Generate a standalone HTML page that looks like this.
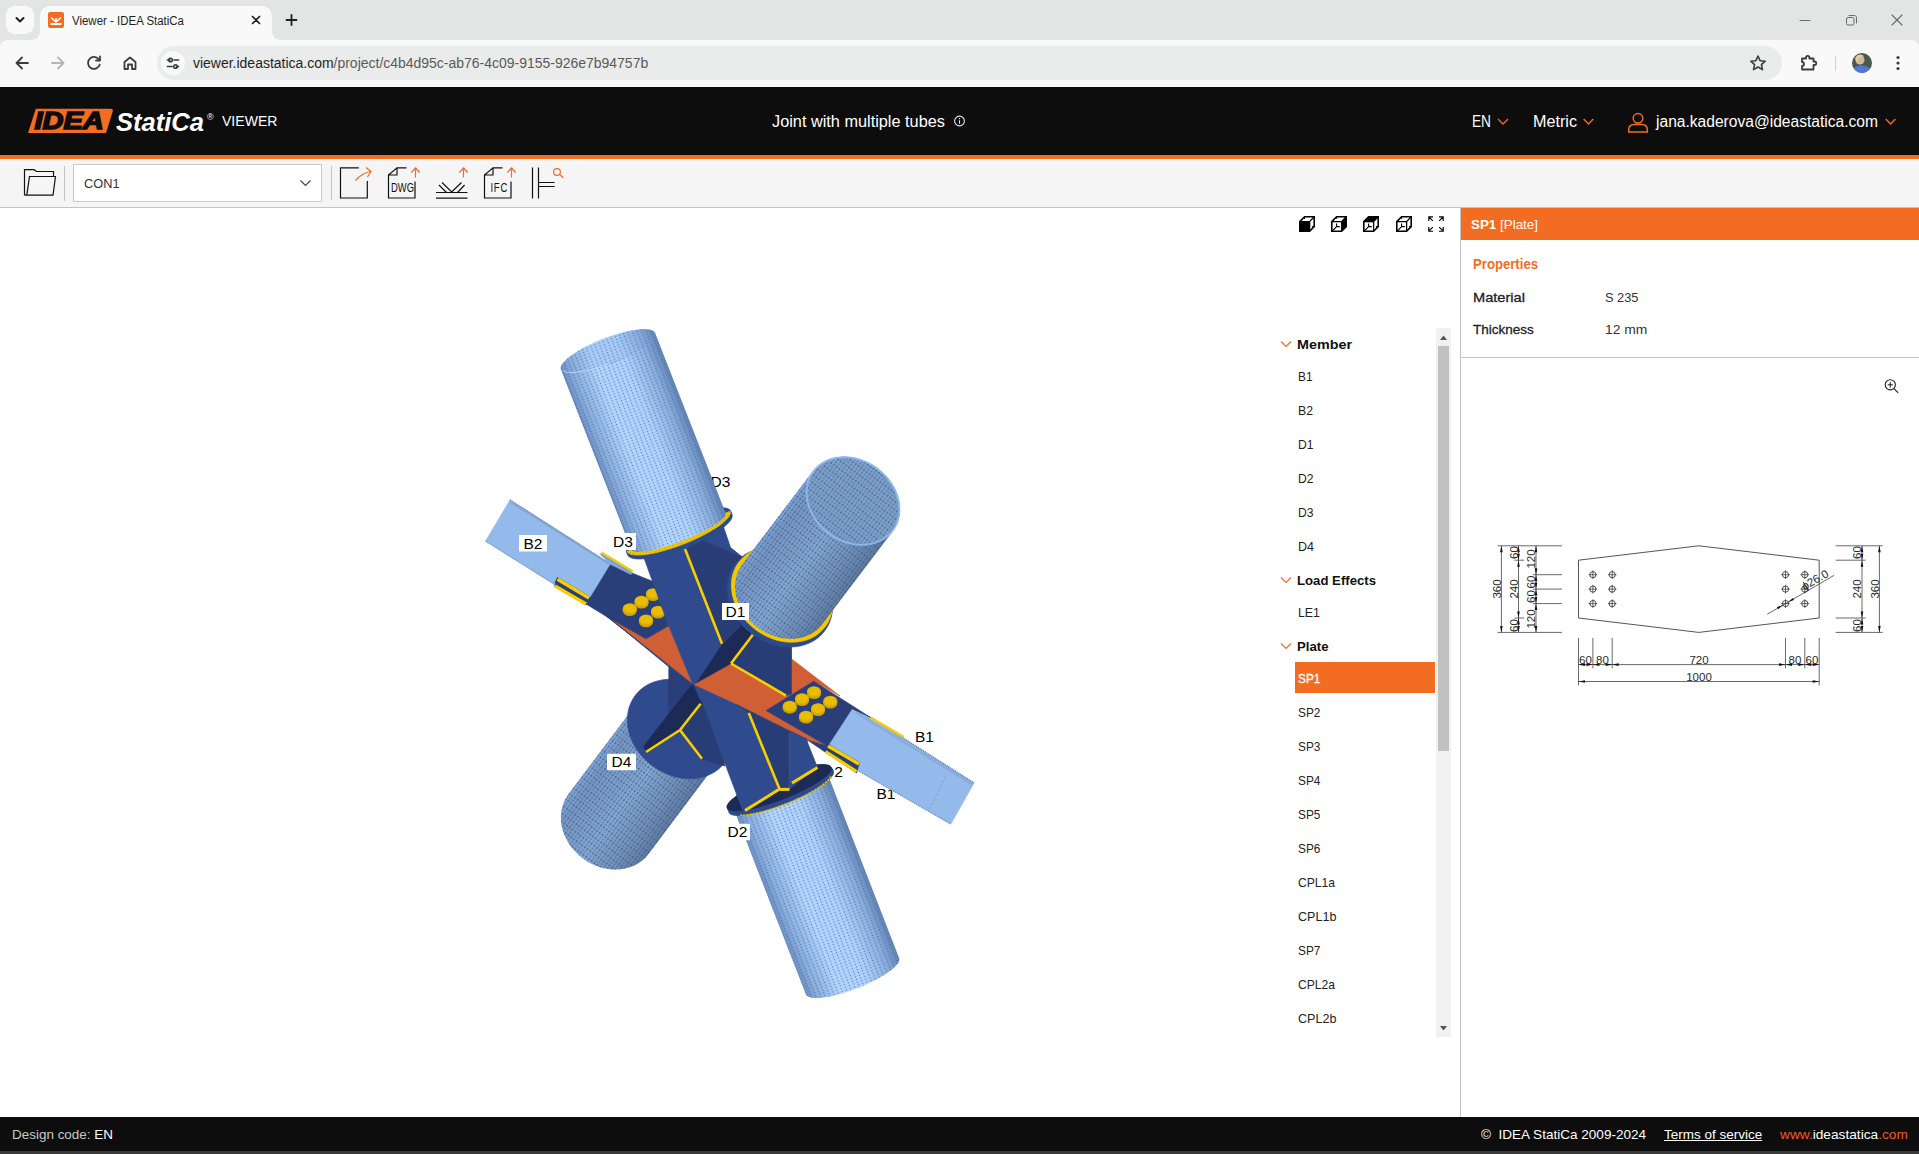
<!DOCTYPE html>
<html lang="en">
<head>
<meta charset="utf-8">
<title>Viewer - IDEA StatiCa</title>
<style>
*{box-sizing:border-box;margin:0;padding:0}
html,body{width:1919px;height:1154px;overflow:hidden;background:#fff}
body{position:relative;font-family:"Liberation Sans",sans-serif;color:#1f1f1f;font-size:14px}
.abs{position:absolute}
.t{position:absolute;white-space:nowrap;line-height:1}
svg{position:absolute;overflow:visible}
/* browser chrome */
#tabstrip{left:0;top:0;width:1919px;height:40px;background:#e3e5e4}
#navbar{left:0;top:40px;width:1919px;height:47px;background:#f9f9f9}
#tabsearch{left:6px;top:6px;width:28px;height:28px;border-radius:9px;background:#f9f9f9}
#tab{left:40px;top:6px;width:232px;height:34px;background:#f9f9f9;border-radius:10px 10px 0 0}
#omni{left:157px;top:46px;width:1625px;height:34px;border-radius:17px;background:#eaeceb}
#omnichip{left:161px;top:51px;width:24px;height:24px;border-radius:12px;background:#f9f9f9}
/* app */
#hdr{left:0;top:87px;width:1919px;height:68px;background:#0d0d0d}
#hdrline{left:0;top:155px;width:1919px;height:4px;background:#f26c22}
#tbar{left:0;top:159px;width:1919px;height:49px;background:#f5f5f5;border-bottom:1px solid #c4c4c4}
#sel{left:73px;top:164px;width:249px;height:38px;background:#fff;border:1px solid #c9c9c9}
#footer{left:0;top:1117px;width:1919px;height:34px;background:#0d0d0d}
#footer2{left:0;top:1151px;width:1919px;height:3px;background:#3a3a3a}
#rpanel{left:1460px;top:208px;width:459px;height:909px;background:#fff;border-left:1px solid #c4c4c4}
#rhead{left:1461px;top:208px;width:458px;height:32px;background:#f26c22}
#rsep{left:1461px;top:357px;width:458px;height:1px;background:#c4c4c4}
#sbtrack{left:1436px;top:328px;width:15px;height:709px;background:#f1f1f1}
#sbthumb{left:1438px;top:346px;width:11px;height:405px;background:#c1c1c1}
#selrow{left:1295px;top:662px;width:140px;height:31px;background:#f26c22}
.tree{font-size:13.5px;color:#222}
.treeh{font-size:13.5px;font-weight:bold;color:#111}
.w{color:#fff}
</style>
</head>
<body>
<!-- ===== browser chrome ===== -->
<div class="abs" id="tabstrip"></div>
<div class="abs" id="navbar"></div>
<div class="abs" id="tabsearch"></div>
<div class="abs" id="tab"></div>
<div class="abs" id="omni"></div>
<div class="abs" id="omnichip"></div>
<!--CHROME-ICONS-START-->
<svg id="chromeicons" style="left:0;top:0" width="1919" height="87" viewBox="0 0 1919 87" fill="none" stroke-linecap="round" stroke-linejoin="round">
<!-- tab curves -->
<path d="M30 40 Q40 40 40 30 L40 40Z M282 40 Q272 40 272 30 L272 40Z" fill="#f9f9f9" stroke="none"/>
<path d="M0 48 Q0 40 8 40 L0 40Z M1919 48 Q1919 40 1911 40 L1919 40Z" fill="#e3e5e4" stroke="none"/>
<!-- tab search chevron -->
<path d="M16.5 18 L20 21.5 L23.5 18" stroke="#1f1f1f" stroke-width="2"/>
<!-- favicon -->
<rect x="48" y="12" width="16" height="16" rx="2" fill="#f26c22" stroke="none"/>
<path d="M51.5 18 L56 22 L60.500 18 M56 22 L56 18.500" stroke="#fff" stroke-width="1.600"/>
<path d="M50.500 24 H61.500" stroke="#fff" stroke-width="2" stroke-linecap="butt"/>
<!-- tab close -->
<path d="M252.500 16.500 L259.500 23.500 M259.500 16.500 L252.500 23.500" stroke="#1f1f1f" stroke-width="1.700"/>
<!-- plus -->
<path d="M286.500 20 H296.500 M291.500 15 V25" stroke="#1f1f1f" stroke-width="1.800"/>
<!-- window controls -->
<path d="M1800 20.500 H1810" stroke="#6b6b6b" stroke-width="1"/>
<rect x="1846.500" y="17.500" width="7.500" height="7.500" rx="1.500" stroke="#6b6b6b" stroke-width="1"/>
<path d="M1849 15.500 H1854.500 Q1856.500 15.500 1856.500 17.500 V23" stroke="#6b6b6b" stroke-width="1"/>
<path d="M1892 15 L1902 25 M1902 15 L1892 25" stroke="#6b6b6b" stroke-width="1.100"/>
<!-- back -->
<path d="M28 63 H16.500 M22 57.500 L16.500 63 L22 68.500" stroke="#3c3c3c" stroke-width="1.800"/>
<!-- forward -->
<path d="M52 63 H63.500 M58 57.500 L63.500 63 L58 68.500" stroke="#b4b6b5" stroke-width="1.800"/>
<!-- reload -->
<path d="M99 59.500 A6 6 0 1 0 99.800 64.500" stroke="#3c3c3c" stroke-width="1.800"/>
<path d="M100 56.500 V60.500 H96" stroke="#3c3c3c" stroke-width="1.800"/>
<!-- home -->
<path d="M124.500 62 L130 57.500 L135.500 62 V69 H132 V64.500 H128 V69 H124.500Z" stroke="#3c3c3c" stroke-width="1.800"/>
<!-- tune -->
<path d="M167.500 60 H170 M174 60 H178.500 M167.500 66.500 H172 M176.500 66.500 H178.500" stroke="#3c3c3c" stroke-width="1.700"/>
<circle cx="170.500" cy="60" r="1.800" stroke="#3c3c3c" stroke-width="1.500"/>
<circle cx="175.500" cy="66.500" r="1.800" stroke="#3c3c3c" stroke-width="1.500"/>
<!-- star -->
<path d="M1758 56 L1760.100 60.700 L1765.200 61.200 L1761.400 64.600 L1762.500 69.600 L1758 67 L1753.500 69.600 L1754.600 64.600 L1750.800 61.200 L1755.900 60.700Z" stroke="#3c3c3c" stroke-width="1.600"/>
<!-- extension -->
<path d="M1802 58.500 H1806 V57.500 A1.700 1.700 0 0 1 1809.400 57.500 V58.500 H1813.500 V61.500 H1814.500 A1.700 1.700 0 0 1 1814.500 65 H1813.500 V69.500 H1802 V66 A2 2 0 0 0 1802 62Z" stroke="#3c3c3c" stroke-width="1.800"/>
<!-- sep -->
<path d="M1835.500 56 V70" stroke="#c3dfe6" stroke-width="1.300"/>
<!-- avatar -->
<circle cx="1862" cy="63" r="10" fill="#4a5a4a" stroke="none"/>
<circle cx="1860" cy="60" r="4.500" fill="#d9b79a" stroke="none"/>
<path d="M1853.500 68 Q1861 62.500 1870 68.500 Q1866 73 1862 73 Q1857 73 1853.500 68Z" fill="#4f78d6" stroke="none"/>
<path d="M1855 58 Q1859 52 1864.500 56.500 Q1860 56 1856.500 62Z" fill="#e5cf9c" stroke="none"/>
<!-- dots -->
<circle cx="1898" cy="57.500" r="1.600" fill="#3c3c3c" stroke="none"/>
<circle cx="1898" cy="63" r="1.600" fill="#3c3c3c" stroke="none"/>
<circle cx="1898" cy="68.500" r="1.600" fill="#3c3c3c" stroke="none"/>
</svg>
<!--CHROME-ICONS-END-->
<div class="t" id="tabtitle" style="left:72.0px;top:14.5px;font-size:12px;color:#1f1f1f;transform:scaleX(0.956);transform-origin:0 50%">Viewer - IDEA StatiCa</div>
<div class="t" id="url" style="left:193.0px;top:56px;font-size:14px;color:#1f1f1f;transform:scaleX(0.998);transform-origin:0 50%">viewer.ideastatica.com<span style="color:#5a5a5a">/project/c4b4d95c-ab76-4c09-9155-926e7b94757b</span></div>

<!-- ===== app header ===== -->
<div class="abs" id="hdr"></div>
<div class="abs" id="hdrline"></div>
<div class="t w" id="viewer" style="left:222.0px;top:114px;font-size:14px;transform:scaleX(1.003);transform-origin:0 50%">VIEWER</div>
<div class="t w" id="ptitle" style="left:772.0px;top:114px;font-size:16px;transform:scaleX(1.018);transform-origin:0 50%">Joint with multiple tubes</div>
<div class="t w" id="lang" style="left:1471.7px;top:114px;font-size:16px;transform:scaleX(0.855);transform-origin:0 50%">EN</div>
<div class="t w" id="metric" style="left:1532.5px;top:114px;font-size:16px;transform:scaleX(1.010);transform-origin:0 50%">Metric</div>
<div class="t w" id="email" style="left:1656.0px;top:114px;font-size:16px;transform:scaleX(0.974);transform-origin:0 50%">jana.kaderova@ideastatica.com</div>
<!--HDR-ICONS-START-->
<svg id="hdricons" style="left:0;top:87px" width="1919" height="68" viewBox="0 87 1919 68" fill="none" stroke="#f26c22" stroke-width="1.300">
<!-- logo -->
<path d="M28 133 L35.800 108.700 H110.500 Q113.600 108.700 112.700 111.500 L106 133Z" fill="#f26c22" stroke="none"/>
<text x="34.500" y="129.300" font-family="Liberation Sans, sans-serif" font-weight="bold" font-style="italic" font-size="23" fill="#0d0d0d" stroke="#0d0d0d" stroke-width="1.500" textLength="69" lengthAdjust="spacingAndGlyphs">IDEA</text>
<text x="116" y="130.500" font-family="Liberation Sans, sans-serif" font-weight="bold" font-style="italic" font-size="26.500" fill="#fff" stroke="none" textLength="88" lengthAdjust="spacingAndGlyphs">StatiCa</text>
<text x="207" y="119.500" font-family="Liberation Sans, sans-serif" font-size="9" fill="#fff" stroke="none">®</text>
<!-- info -->
<circle cx="959.500" cy="121" r="4.900" stroke="#e8e8e8" stroke-width="1.100"/>
<path d="M959.500 120.300 V123.700 M959.500 118 V119.200" stroke="#e8e8e8" stroke-width="1.100"/>
<!-- chevrons -->
<path d="M1498 119 L1503 124 L1508 119 M1583.700 119 L1588.500 124 L1593.300 119 M1885.800 119 L1890.600 124 L1895.400 119"/>
<!-- user -->
<circle cx="1638" cy="118.300" r="4.800" stroke-width="1.500"/>
<path d="M1628.700 132 V130 Q1628.700 124.500 1634 124.500 H1642 Q1647.300 124.500 1647.300 130 V132Z" stroke-width="1.500"/>
</svg>
<!--HDR-ICONS-END-->

<!-- ===== toolbar ===== -->
<div class="abs" id="tbar"></div>
<div class="abs" id="sel"></div>
<div class="t" id="con1" style="left:84.2px;top:177px;font-size:13.5px;color:#333;transform:scaleX(0.946);transform-origin:0 50%">CON1</div>
<!--TB-ICONS-START-->
<svg id="tbicons" style="left:0;top:159px" width="600" height="49" viewBox="0 159 600 49" fill="none" stroke="#111" stroke-width="1.200">
<!-- folder -->
<path d="M24.500 195.200 V169.700 H34 L36.500 171.500 H53.500 V176.500 M24.500 195.200 H53 L55.500 176.500 H29.500 L26.800 195.200"/>
<path d="M64.500 166 V201 M331.500 166 V200" stroke="#c4c4c4" stroke-width="1"/>
<!-- select chevron -->
<path d="M300.500 180.500 L305.500 185.500 L310.500 180.500" stroke="#444" stroke-width="1.200"/>
<!-- export -->
<path d="M358.800 167.800 H340.500 V198 H367.300 V181"/>
<path d="M355.500 180.500 Q362 173 370.500 171.500 M366 167.500 L371 171.500 L367.500 177" stroke="#f26c22"/>
<!-- dwg -->
<path d="M406.500 167.800 H397 L388.500 175 V198 H415 V181.500 M388.500 175 H397 V167.800"/>
<path d="M415.500 177.500 V168 M411.300 172.500 L415.500 168 L419.700 172.500" stroke="#f26c22"/>
<!-- weld -->
<path d="M436 192.500 H467.500 M436 198.200 H467.500 M439 185 L446.500 192.500 M442 182.500 L451.700 192 L461.500 182.500 M464.600 185 L457.500 192.500"/>
<path d="M463.500 177.500 V168 M459.300 172.500 L463.500 168 L467.700 172.500" stroke="#f26c22"/>
<!-- ifc -->
<path d="M502.500 167.800 H493 L484.500 175 V198 H511 V181.500 M484.500 175 H493 V167.800"/>
<path d="M511.500 177.500 V168 M507.300 172.500 L511.500 168 L515.700 172.500" stroke="#f26c22"/>
<!-- section -->
<path d="M532.500 167.500 V198.500 M538.500 167.500 V198.500 M538.500 182.500 H554.600 M538.500 186.500 H554.600"/>
<circle cx="557" cy="172" r="3.400" stroke="#f26c22"/>
<path d="M559.500 174.500 L563.500 177.800" stroke="#f26c22"/>
<text x="391" y="191.500" font-family="Liberation Sans, sans-serif" font-size="13" fill="#111" stroke="none" textLength="23" lengthAdjust="spacingAndGlyphs">DWG</text>
<text x="490.500" y="191.500" font-family="Liberation Sans, sans-serif" font-size="13" fill="#111" stroke="none" textLength="17.500" lengthAdjust="spacingAndGlyphs" letter-spacing="1">IFC</text>
</svg>
<!--TB-ICONS-END-->

<!-- ===== 3D view ===== -->
<!--VIEWICONS-START-->
<svg id="viewicons" style="left:0;top:208px" width="1460" height="40" viewBox="0 208 1460 40" fill="none" stroke="#000"><g transform="translate(1299,216)"><path d="M0.8 5.6 L5.6 0.8 H15.2 V10.6 L10.6 15.2 H0.8Z" stroke-width="1.600" stroke-linejoin="miter"/><path d="M0.8 5.6 H10.6 V15.2 M10.600 5.600 L15.200 0.800" stroke-width="1.300"/><path d="M0.8 5.6 H10.6 V15.2 H0.8Z" fill="#000"/><path d="M5.6 1 V3 M15 10.600 H13 " stroke-width="1"/></g><g transform="translate(1331,216)"><path d="M0.8 5.6 L5.6 0.8 H15.2 V10.6 L10.6 15.2 H0.8Z" stroke-width="1.600" stroke-linejoin="miter"/><path d="M0.8 5.6 H10.6 V15.2 M10.600 5.600 L15.200 0.800" stroke-width="1.300"/><path d="M5.600 1 V2.800 M5.600 7.400 V10.600 H8.800 M13 10.600 H15 M5.600 10.600 L1.400 14.800" stroke-width="1.100"/><path d="M10.6 5.6 L15.2 0.8 V10.6 L10.6 15.2Z" fill="#000"/></g><g transform="translate(1363,216)"><path d="M0.8 5.6 L5.6 0.8 H15.2 V10.6 L10.6 15.2 H0.8Z" stroke-width="1.600" stroke-linejoin="miter"/><path d="M0.8 5.6 H10.6 V15.2 M10.600 5.600 L15.200 0.800" stroke-width="1.300"/><path d="M5.600 1 V2.800 M5.600 7.400 V10.600 H8.800 M13 10.600 H15 M5.600 10.600 L1.400 14.800" stroke-width="1.100"/><path d="M0.8 5.6 L5.6 0.8 H15.2 L10.6 5.6Z" fill="#000"/></g><g transform="translate(1396,216)"><path d="M0.8 5.6 L5.6 0.8 H15.2 V10.6 L10.6 15.2 H0.8Z" stroke-width="1.600" stroke-linejoin="miter"/><path d="M0.8 5.6 H10.6 V15.2 M10.600 5.600 L15.200 0.800" stroke-width="1.300"/><path d="M5.600 1 V2.800 M5.600 7.400 V10.600 H8.800 M13 10.600 H15 M5.600 10.600 L1.400 14.800" stroke-width="1.100"/></g><g transform="translate(1428,216)" stroke-width="1.150"><path d="M0.8 5 V0.8 H5 M0.800 0.800 L4.800 4.800 M11 0.800 H15.200 V5 M15.200 0.800 L11.200 4.800 M0.800 11 V15.200 H5 M0.800 15.200 L4.800 11.200 M11 15.200 H15.200 V11 M15.200 15.200 L11.200 11.200"/></g></svg>
<!--VIEWICONS-END-->
<!--MODEL-START-->
<svg id="model" style="left:440px;top:300px" width="580" height="720" viewBox="440 300 580 720">
<defs><pattern id="hA" patternUnits="userSpaceOnUse" width="4.4" height="8.8" patternTransform="rotate(-21.3)"><path d="M2.2 0 V8.8" stroke="#4f6689" stroke-width="1.25" stroke-dasharray="1.3 1.6"/></pattern><pattern id="hB" patternUnits="userSpaceOnUse" width="3.4" height="6.8" patternTransform="rotate(36.5)"><path d="M1.7 0 V6.8" stroke="#3d506f" stroke-width="1.15" stroke-dasharray="1.2 1.6"/></pattern><linearGradient id="g1" gradientUnits="userSpaceOnUse" x1="639.8" y1="699.3" x2="720.2" y2="758.7"><stop offset="0" stop-color="#7ca3d6"/><stop offset="0.12" stop-color="#7596c4"/><stop offset="0.5" stop-color="#81a7d4"/><stop offset="0.8" stop-color="#6f8fba"/><stop offset="1" stop-color="#5c79a2"/></linearGradient><linearGradient id="g2" gradientUnits="userSpaceOnUse" x1="733.6" y1="808.5" x2="826.9" y2="772.3"><stop offset="0" stop-color="#6a8ec2"/><stop offset="0.1" stop-color="#88addf"/><stop offset="0.33" stop-color="#b0d5ff"/><stop offset="0.62" stop-color="#aed2ff"/><stop offset="0.86" stop-color="#88acde"/><stop offset="1" stop-color="#5f82b5"/></linearGradient><linearGradient id="g3" gradientUnits="userSpaceOnUse" x1="560.9" y1="369.6" x2="655.1" y2="333.0"><stop offset="0" stop-color="#6a8ec2"/><stop offset="0.1" stop-color="#88addf"/><stop offset="0.33" stop-color="#b0d5ff"/><stop offset="0.62" stop-color="#aed2ff"/><stop offset="0.86" stop-color="#88acde"/><stop offset="1" stop-color="#5f82b5"/></linearGradient><linearGradient id="g4" gradientUnits="userSpaceOnUse" x1="741.8" y1="564.8" x2="822.2" y2="624.2"><stop offset="0" stop-color="#7ca3d6"/><stop offset="0.12" stop-color="#7596c4"/><stop offset="0.5" stop-color="#81a7d4"/><stop offset="0.8" stop-color="#6f8fba"/><stop offset="1" stop-color="#5c79a2"/></linearGradient></defs>
<g id="lblback" font-family="Liberation Sans, sans-serif" font-size="15.5" fill="#000"><text x="710.500" y="486.500">D3</text><text x="823" y="776.500">D2</text><text x="876.500" y="798.500">B1</text></g>
<path d="M648.7 853.7 L645.8 857.2 L642.5 860.2 L638.8 862.9 L634.8 865.2 L630.5 867.0 L626.0 868.3 L621.3 869.2 L616.4 869.6 L611.5 869.4 L606.5 868.8 L601.5 867.7 L596.6 866.1 L591.9 864.0 L587.3 861.5 L583.0 858.6 L578.9 855.3 L575.2 851.6 L571.8 847.7 L568.8 843.5 L566.3 839.1 L564.2 834.5 L562.6 829.8 L561.5 825.1 L561.0 820.3 L560.9 815.6 L561.4 810.9 L562.4 806.4 L563.9 802.1 L565.9 798.1 L568.3 794.3 L639.8 699.3 L642.7 695.8 L646.0 692.8 L649.7 690.1 L653.7 687.8 L658.0 686.0 L662.5 684.7 L667.2 683.8 L672.1 683.4 L677.0 683.6 L682.0 684.2 L687.0 685.3 L691.9 686.9 L696.6 689.0 L701.2 691.5 L705.5 694.4 L709.6 697.7 L713.3 701.4 L716.7 705.3 L719.7 709.5 L722.2 713.9 L724.3 718.5 L725.9 723.2 L727.0 727.9 L727.5 732.7 L727.6 737.4 L727.1 742.1 L726.1 746.6 L724.6 750.9 L722.6 754.9 L720.2 758.7Z" fill="url(#g1)" />
<path d="M648.7 853.7 L645.8 857.2 L642.5 860.2 L638.8 862.9 L634.8 865.2 L630.5 867.0 L626.0 868.3 L621.3 869.2 L616.4 869.6 L611.5 869.4 L606.5 868.8 L601.5 867.7 L596.6 866.1 L591.9 864.0 L587.3 861.5 L583.0 858.6 L578.9 855.3 L575.2 851.6 L571.8 847.7 L568.8 843.5 L566.3 839.1 L564.2 834.5 L562.6 829.8 L561.5 825.1 L561.0 820.3 L560.9 815.6 L561.4 810.9 L562.4 806.4 L563.9 802.1 L565.9 798.1 L568.3 794.3 L639.8 699.3 L642.7 695.8 L646.0 692.8 L649.7 690.1 L653.7 687.8 L658.0 686.0 L662.5 684.7 L667.2 683.8 L672.1 683.4 L677.0 683.6 L682.0 684.2 L687.0 685.3 L691.9 686.9 L696.6 689.0 L701.2 691.5 L705.5 694.4 L709.6 697.7 L713.3 701.4 L716.7 705.3 L719.7 709.5 L722.2 713.9 L724.3 718.5 L725.9 723.2 L727.0 727.9 L727.5 732.7 L727.6 737.4 L727.1 742.1 L726.1 746.6 L724.6 750.9 L722.6 754.9 L720.2 758.7Z" fill="url(#hB)" opacity="0.85"/>
<path d="M725.0 762.3 L721.9 765.9 L718.4 769.2 L714.4 772.1 L710.0 774.4 L705.3 776.3 L700.4 777.6 L695.2 778.5 L689.8 778.7 L684.4 778.5 L678.8 777.7 L673.4 776.3 L667.9 774.5 L662.6 772.1 L657.5 769.3 L652.7 766.0 L648.1 762.3 L643.9 758.3 L640.1 753.9 L636.7 749.3 L633.8 744.4 L631.4 739.4 L629.6 734.2 L628.3 729.0 L627.5 723.8 L627.3 718.7 L627.8 713.7 L628.7 708.8 L630.3 704.2 L632.4 699.8 L635.0 695.7 L638.1 692.1 L641.6 688.8 L645.6 685.9 L650.0 683.6 L654.7 681.7 L659.6 680.4 L664.8 679.5 L670.2 679.3 L675.6 679.5 L681.2 680.3 L686.6 681.7 L692.1 683.5 L697.4 685.9 L702.5 688.7 L707.3 692.0 L711.9 695.7 L716.1 699.7 L719.9 704.1 L723.3 708.7 L726.2 713.6 L728.6 718.6 L730.4 723.8 L731.7 729.0 L732.5 734.2 L732.7 739.3 L732.2 744.3 L731.3 749.2 L729.7 753.8 L727.6 758.2 L725.0 762.3Z" fill="#2f4a8d" stroke="#2f4a8d" stroke-width="0.7" stroke-linejoin="round" />
<path d="M899.1 958.1 L899.3 959.4 L899.1 961.0 L898.3 962.7 L897.0 964.6 L895.2 966.6 L893.0 968.7 L890.3 970.8 L887.2 973.1 L883.7 975.3 L879.9 977.6 L875.8 979.9 L871.4 982.1 L866.8 984.3 L862.1 986.4 L857.2 988.3 L852.3 990.1 L847.4 991.8 L842.6 993.3 L837.9 994.6 L833.3 995.8 L828.9 996.7 L824.8 997.3 L821.0 997.8 L817.6 998.0 L814.5 998.0 L811.8 997.7 L809.6 997.2 L807.9 996.4 L806.6 995.5 L805.9 994.3 L733.6 808.5 L733.4 807.2 L733.7 805.6 L734.5 803.9 L735.8 802.0 L737.5 800.0 L739.8 797.9 L742.5 795.8 L745.6 793.5 L749.0 791.3 L752.9 789.0 L757.0 786.7 L761.4 784.5 L766.0 782.3 L770.7 780.2 L775.5 778.3 L780.4 776.5 L785.3 774.8 L790.2 773.3 L794.9 772.0 L799.5 770.8 L803.8 769.9 L807.9 769.3 L811.7 768.8 L815.2 768.6 L818.3 768.6 L820.9 768.9 L823.1 769.4 L824.9 770.2 L826.1 771.1 L826.9 772.3Z" fill="url(#g2)" />
<path d="M899.1 958.1 L899.3 959.4 L899.1 961.0 L898.3 962.7 L897.0 964.6 L895.2 966.6 L893.0 968.7 L890.3 970.8 L887.2 973.1 L883.7 975.3 L879.9 977.6 L875.8 979.9 L871.4 982.1 L866.8 984.3 L862.1 986.4 L857.2 988.3 L852.3 990.1 L847.4 991.8 L842.6 993.3 L837.9 994.6 L833.3 995.8 L828.9 996.7 L824.8 997.3 L821.0 997.8 L817.6 998.0 L814.5 998.0 L811.8 997.7 L809.6 997.2 L807.9 996.4 L806.6 995.5 L805.9 994.3 L733.6 808.5 L733.4 807.2 L733.7 805.6 L734.5 803.9 L735.8 802.0 L737.5 800.0 L739.8 797.9 L742.5 795.8 L745.6 793.5 L749.0 791.3 L752.9 789.0 L757.0 786.7 L761.4 784.5 L766.0 782.3 L770.7 780.2 L775.5 778.3 L780.4 776.5 L785.3 774.8 L790.2 773.3 L794.9 772.0 L799.5 770.8 L803.8 769.9 L807.9 769.3 L811.7 768.8 L815.2 768.6 L818.3 768.6 L820.9 768.9 L823.1 769.4 L824.9 770.2 L826.1 771.1 L826.9 772.3Z" fill="url(#hA)" opacity="0.78"/>
<path d="M833.0 772.1 L833.2 773.4 L832.8 774.9 L831.8 776.6 L830.3 778.4 L828.2 780.4 L825.6 782.6 L822.6 784.8 L819.0 787.1 L815.1 789.5 L810.8 791.9 L806.1 794.3 L801.2 796.7 L796.1 799.1 L790.8 801.4 L785.4 803.5 L779.9 805.6 L774.5 807.5 L769.1 809.2 L763.8 810.8 L758.8 812.2 L754.0 813.3 L749.4 814.2 L745.3 814.9 L741.5 815.3 L738.1 815.5 L735.3 815.4 L732.9 815.1 L731.0 814.5 L729.7 813.6 L729.0 812.6 L727.2 807.9 L727.0 806.6 L727.4 805.2 L728.4 803.5 L729.9 801.6 L732.0 799.6 L734.6 797.5 L737.6 795.2 L741.2 792.9 L745.1 790.5 L749.4 788.1 L754.1 785.7 L759.0 783.3 L764.1 781.0 L769.4 778.7 L774.9 776.5 L780.3 774.5 L785.8 772.6 L791.1 770.8 L796.4 769.3 L801.4 767.9 L806.2 766.8 L810.8 765.9 L814.9 765.2 L818.7 764.8 L822.1 764.6 L824.9 764.7 L827.3 765.0 L829.2 765.6 L830.5 766.4 L831.2 767.5Z" fill="#2d4a8c" stroke="#2d4a8c" stroke-width="0.7" stroke-linejoin="round" />
<path d="M830.9 776.3 L830.0 777.9 L828.7 779.6 L826.9 781.5 L824.6 783.4 L821.8 785.5 L818.7 787.7 L815.2 789.9 L811.3 792.1 L807.2 794.4 L802.8 796.6 L798.1 798.8 L793.3 800.9 L788.4 803.0 L783.4 804.9 L778.4 806.8 L773.4 808.5 L768.5 810.0 L763.7 811.4 L759.1 812.5 L754.7 813.5 L750.6 814.3 L746.8 814.9 L743.3 815.2 L740.2 815.3" stroke="#e7bd00" stroke-width="1.5" fill="none" stroke-dasharray="2.5 0.8"/>
<path d="M831.2 767.5 L831.4 768.8 L831.0 770.2 L830.0 771.9 L828.5 773.8 L826.4 775.8 L823.8 777.9 L820.8 780.2 L817.2 782.5 L813.3 784.9 L809.0 787.3 L804.3 789.7 L799.4 792.1 L794.3 794.4 L789.0 796.7 L783.6 798.9 L778.1 800.9 L772.6 802.8 L767.3 804.6 L762.0 806.1 L757.0 807.5 L752.2 808.6 L747.6 809.5 L743.5 810.2 L739.7 810.6 L736.3 810.8 L733.5 810.7 L731.1 810.4 L729.2 809.8 L727.9 809.0 L727.2 807.9 L727.0 806.6 L727.4 805.2 L728.4 803.5 L729.9 801.6 L732.0 799.6 L734.6 797.5 L737.6 795.2 L741.2 792.9 L745.1 790.5 L749.4 788.1 L754.1 785.7 L759.0 783.3 L764.1 781.0 L769.4 778.7 L774.9 776.5 L780.3 774.5 L785.8 772.6 L791.1 770.8 L796.4 769.3 L801.4 767.9 L806.2 766.8 L810.8 765.9 L814.9 765.2 L818.7 764.8 L822.1 764.6 L824.9 764.7 L827.3 765.0 L829.2 765.6 L830.5 766.4 L831.2 767.5Z" fill="#1c2a55" stroke="#1c2a55" stroke-width="0.7" stroke-linejoin="round" />
<path d="M510.0 500.0 L612.0 565.3 L593.0 598.0 L586.0 604.0 L555.0 584.7 L485.6 541.1Z" fill="#94b9eb" stroke="#94b9eb" stroke-width="0.7" stroke-linejoin="round" />
<path d="M510 500 L610 564.100" stroke="#5f7fae" stroke-width="1.600" fill="none" stroke-dasharray="1 1"/>
<path d="M511 502 L609 563.500" stroke="#7f9fcf" stroke-width="2.500" fill="none" opacity="0.6"/>
<path d="M485.600 541.100 L555 584.700" stroke="#6f8fc0" stroke-width="1.200" fill="none" stroke-dasharray="1 1"/>
<path d="M555.0 582.5 L586.0 600.5 L665.0 662.0 L669.0 667.0 L605.0 614.5 L589.4 597.5 L557.0 578.5Z" fill="#2a3f7a" stroke="#2a3f7a" stroke-width="0.7" stroke-linejoin="round" />
<path d="M852.0 708.8 L870.6 717.5 L974.0 783.0 L950.8 824.0 L858.7 771.0 L829.0 744.0Z" fill="#94b9eb" stroke="#94b9eb" stroke-width="0.7" stroke-linejoin="round" />
<path d="M870.600 717.500 L974 783" stroke="#5f7fae" stroke-width="1.600" fill="none" stroke-dasharray="1 1"/>
<path d="M856 712.500 L972.500 784.500" stroke="#7f9fcf" stroke-width="2.500" fill="none" opacity="0.5"/>
<path d="M858.700 771 L950.800 824" stroke="#6f8fc0" stroke-width="1.200" fill="none" stroke-dasharray="1 1"/>
<path d="M946 775.700 L929 810" stroke="#7a9bcc" stroke-width="0.800" fill="none" stroke-dasharray="3 2"/>
<path d="M605.0 614.5 L646.0 638.8 L668.6 625.6 L693.0 684.7Z" fill="#d05f35" stroke="#d05f35" stroke-width="0.7" stroke-linejoin="round" />
<path d="M605 614.500 L693 684.700" stroke="#2a3f7a" stroke-width="1" fill="none"/>
<path d="M791.0 658.5 L840.0 696.0 L813.8 681.2 L791.0 695.0Z" fill="#d05f35" stroke="#d05f35" stroke-width="0.7" stroke-linejoin="round" />
<path d="M693.0 684.7 L731.0 663.5 L786.0 695.6 L791.0 695.0 L813.8 681.2 L828.0 746.2 L807.0 739.4 L737.5 705.0Z" fill="#d05f35" stroke="#d05f35" stroke-width="0.7" stroke-linejoin="round" />
<path d="M610.6 564.4 L653.0 581.5 L669.0 625.6 L646.0 638.8 L605.0 615.5 L586.0 604.0 L590.7 597.0Z" fill="#2a3f7a" stroke="#2a3f7a" stroke-width="0.7" stroke-linejoin="round" />
<ellipse cx="653" cy="595.8" rx="7" ry="5.2" fill="#cfa400"/>
<rect x="646" y="593.4" width="14" height="2.4" fill="#cfa400"/>
<ellipse cx="653" cy="593.4" rx="7" ry="5.200" fill="#e3b700"/>
<ellipse cx="653" cy="593.1" rx="5.600" ry="4" fill="#e9be00"/>
<ellipse cx="641.5" cy="603.4" rx="7" ry="5.2" fill="#cfa400"/>
<rect x="634.5" y="601" width="14" height="2.4" fill="#cfa400"/>
<ellipse cx="641.5" cy="601" rx="7" ry="5.200" fill="#e3b700"/>
<ellipse cx="641.5" cy="600.7" rx="5.600" ry="4" fill="#e9be00"/>
<ellipse cx="629.75" cy="610.8" rx="7" ry="5.2" fill="#cfa400"/>
<rect x="622.75" y="608.4" width="14" height="2.4" fill="#cfa400"/>
<ellipse cx="629.75" cy="608.4" rx="7" ry="5.200" fill="#e3b700"/>
<ellipse cx="629.75" cy="608.1" rx="5.600" ry="4" fill="#e9be00"/>
<ellipse cx="658" cy="613.4" rx="7" ry="5.2" fill="#cfa400"/>
<rect x="651" y="611" width="14" height="2.4" fill="#cfa400"/>
<ellipse cx="658" cy="611" rx="7" ry="5.200" fill="#e3b700"/>
<ellipse cx="658" cy="610.7" rx="5.600" ry="4" fill="#e9be00"/>
<ellipse cx="646" cy="622.0" rx="7" ry="5.2" fill="#cfa400"/>
<rect x="639" y="619.6" width="14" height="2.4" fill="#cfa400"/>
<ellipse cx="646" cy="619.6" rx="7" ry="5.200" fill="#e3b700"/>
<ellipse cx="646" cy="619.3000000000001" rx="5.600" ry="4" fill="#e9be00"/>
<path d="M600.0 553.5 L632.5 572.3 L631.0 574.5 L610.0 564.1Z" fill="#86a8d8" stroke="#86a8d8" stroke-width="0.7" stroke-linejoin="round" />
<path d="M601.5 552.5 L632.5 571.3" stroke="#f7cf00" stroke-width="2.6" stroke-linecap="butt" fill="none"/>
<path d="M601 554.500 L631.500 573" stroke="#7d9fd0" stroke-width="1.600" fill="none"/>
<path d="M557.5 577.5 L589.5 596.5 L586.0 605.0 L554.5 586.5Z" fill="#2a3f7a" stroke="#2a3f7a" stroke-width="0.7" stroke-linejoin="round" />
<path d="M557.5 579.2 L589.0 598.0" stroke="#f7cf00" stroke-width="3.4" stroke-linecap="butt" fill="none"/>
<path d="M555.0 585.8 L586.0 604.0" stroke="#f7cf00" stroke-width="3.2" stroke-linecap="butt" fill="none"/>
<path d="M813.8 681.2 L870.6 717.5 L852.0 708.8 L829.0 744.0 L828.0 746.2 L766.2 710.6Z" fill="#2a3f7a" stroke="#2a3f7a" stroke-width="0.7" stroke-linejoin="round" />
<path d="M807.5 740.0 L828.0 746.2 L829.0 744.0 L857.0 770.0 L856.2 772.0 L825.0 752.0Z" fill="#2a3f7a" stroke="#2a3f7a" stroke-width="0.7" stroke-linejoin="round" />
<ellipse cx="814" cy="693.9" rx="7" ry="5.2" fill="#cfa400"/>
<rect x="807" y="691.5" width="14" height="2.4" fill="#cfa400"/>
<ellipse cx="814" cy="691.5" rx="7" ry="5.200" fill="#e3b700"/>
<ellipse cx="814" cy="691.2" rx="5.600" ry="4" fill="#e9be00"/>
<ellipse cx="802" cy="700.9" rx="7" ry="5.2" fill="#cfa400"/>
<rect x="795" y="698.5" width="14" height="2.4" fill="#cfa400"/>
<ellipse cx="802" cy="698.5" rx="7" ry="5.200" fill="#e3b700"/>
<ellipse cx="802" cy="698.2" rx="5.600" ry="4" fill="#e9be00"/>
<ellipse cx="789.75" cy="708.4" rx="7" ry="5.2" fill="#cfa400"/>
<rect x="782.75" y="706" width="14" height="2.4" fill="#cfa400"/>
<ellipse cx="789.75" cy="706" rx="7" ry="5.200" fill="#e3b700"/>
<ellipse cx="789.75" cy="705.7" rx="5.600" ry="4" fill="#e9be00"/>
<ellipse cx="830.25" cy="703.4" rx="7" ry="5.2" fill="#cfa400"/>
<rect x="823.25" y="701" width="14" height="2.4" fill="#cfa400"/>
<ellipse cx="830.25" cy="701" rx="7" ry="5.200" fill="#e3b700"/>
<ellipse cx="830.25" cy="700.7" rx="5.600" ry="4" fill="#e9be00"/>
<ellipse cx="818" cy="710.8" rx="7" ry="5.2" fill="#cfa400"/>
<rect x="811" y="708.4" width="14" height="2.4" fill="#cfa400"/>
<ellipse cx="818" cy="708.4" rx="7" ry="5.200" fill="#e3b700"/>
<ellipse cx="818" cy="708.1" rx="5.600" ry="4" fill="#e9be00"/>
<ellipse cx="806" cy="718.4" rx="7" ry="5.2" fill="#cfa400"/>
<rect x="799" y="716" width="14" height="2.4" fill="#cfa400"/>
<ellipse cx="806" cy="716" rx="7" ry="5.200" fill="#e3b700"/>
<ellipse cx="806" cy="715.7" rx="5.600" ry="4" fill="#e9be00"/>
<path d="M870.6 717.5 L903.8 737.0" stroke="#f7cf00" stroke-width="2.6" stroke-linecap="butt" fill="none"/>
<path d="M827.5 744.0 L859.5 762.5 L856.5 773.0 L824.5 751.5Z" fill="#2a3f7a" stroke="#2a3f7a" stroke-width="0.7" stroke-linejoin="round" />
<path d="M828.0 746.0 L859.0 764.0" stroke="#f7cf00" stroke-width="3.4" stroke-linecap="butt" fill="none"/>
<path d="M825.5 751.5 L856.5 771.5" stroke="#f7cf00" stroke-width="3.2" stroke-linecap="butt" fill="none"/>
<path d="M644.0 558.0 L684.5 548.5 L722.0 644.0 L742.0 625.0 L697.0 682.5 L693.0 684.7 L668.6 625.6Z" fill="#2f4a8d" stroke="#2f4a8d" stroke-width="0.7" stroke-linejoin="round" />
<path d="M684.5 548.5 L722.5 527.5 L730.0 547.5 L741.0 556.0 L760.0 566.0 L742.0 625.0 L722.0 644.0Z" fill="#283c75" stroke="#283c75" stroke-width="0.7" stroke-linejoin="round" />
<path d="M703.0 540.0 L723.4 526.5 L730.5 547.5 L741.0 556.5Z" fill="#2f4a8d" stroke="#2f4a8d" stroke-width="0.7" stroke-linejoin="round" />
<path d="M685.0 549.0 L722.0 643.8" stroke="#f7cf00" stroke-width="2.6" stroke-linecap="butt" fill="none"/>
<path d="M732.0 514.3 L732.3 515.8 L732.0 517.6 L731.1 519.5 L729.6 521.6 L727.6 523.8 L725.1 526.1 L722.1 528.6 L718.6 531.1 L714.7 533.6 L710.5 536.2 L705.8 538.7 L700.9 541.2 L695.8 543.6 L690.5 545.9 L685.1 548.1 L679.6 550.2 L674.1 552.1 L668.7 553.7 L663.4 555.2 L658.3 556.5 L653.4 557.5 L648.8 558.2 L644.5 558.7 L640.7 559.0 L637.2 558.9 L634.3 558.7 L631.8 558.1 L629.9 557.3 L628.5 556.2 L627.6 554.9 L626.5 552.1 L626.3 550.6 L626.6 548.9 L627.5 546.9 L628.9 544.9 L630.9 542.6 L633.4 540.3 L636.4 537.9 L639.9 535.4 L643.8 532.8 L648.1 530.3 L652.7 527.7 L657.6 525.2 L662.7 522.8 L668.0 520.5 L673.5 518.3 L679.0 516.3 L684.4 514.4 L689.9 512.7 L695.2 511.2 L700.3 510.0 L705.2 509.0 L709.7 508.2 L714.0 507.7 L717.9 507.4 L721.3 507.5 L724.3 507.8 L726.7 508.3 L728.7 509.1 L730.1 510.2 L730.9 511.5Z" fill="#2d4a8c" stroke="#2d4a8c" stroke-width="0.7" stroke-linejoin="round" />
<path d="M730.1 511.3 L730.3 512.7 L730.0 514.4 L729.1 516.2 L727.6 518.2 L725.6 520.3 L723.1 522.6 L720.2 524.9 L716.7 527.4 L712.8 529.8 L708.6 532.3 L704.0 534.8 L699.2 537.2 L694.1 539.6 L688.8 541.9 L683.5 544.0 L678.1 546.1 L672.7 547.9 L667.3 549.6 L662.1 551.1 L657.0 552.4 L652.2 553.4 L647.7 554.2 L643.5 554.7 L639.8 555.0 L636.4 555.0 L633.5 554.8 L631.1 554.3 L629.2 553.6 L627.8 552.6 L627.0 551.4Z" fill="#f5c800" stroke="#f5c800" stroke-width="0.7" stroke-linejoin="round" />
<path d="M728.8 512.3 L728.8 513.6 L728.3 515.1 L727.3 516.8 L725.7 518.6 L723.7 520.6 L721.2 522.7 L718.2 524.9 L714.8 527.1 L711.1 529.4 L707.0 531.7 L702.6 534.0 L697.9 536.3 L693.1 538.5 L688.1 540.7 L683.0 542.7 L677.8 544.7 L672.7 546.4 L667.6 548.1 L662.6 549.5 L657.8 550.8 L653.3 551.9 L648.9 552.7 L644.9 553.4 L641.3 553.8 L638.0 553.9 L635.2 553.8 L632.8 553.5 L630.9 553.0 L629.5 552.2 L628.6 551.2" stroke="#b08a00" stroke-width="2.4" fill="none" stroke-dasharray="0.5 2.2" opacity="0.7"/>
<path d="M725.6 513.0 L725.7 514.1 L725.4 515.4 L724.5 516.9 L723.1 518.5 L721.2 520.3 L718.8 522.2 L716.0 524.2 L712.8 526.2 L709.2 528.4 L705.3 530.5 L701.1 532.7 L696.6 534.8 L692.0 536.9 L687.2 539.0 L682.3 540.9 L677.3 542.8 L672.4 544.5 L667.6 546.1 L662.8 547.6 L658.3 548.8 L653.9 549.9 L649.8 550.7 L646.1 551.4 L642.7 551.8 L639.7 552.0 L637.1 552.0 L634.9 551.7 L633.3 551.3 L632.1 550.6 L631.5 549.7 L560.9 369.6 L560.7 368.2 L560.9 366.6 L561.7 364.8 L563.0 362.9 L564.8 360.9 L567.0 358.7 L569.7 356.5 L572.9 354.2 L576.4 351.9 L580.2 349.6 L584.4 347.3 L588.8 345.0 L593.4 342.8 L598.2 340.7 L603.1 338.7 L608.1 336.9 L613.0 335.2 L617.9 333.7 L622.7 332.4 L627.3 331.3 L631.7 330.4 L635.9 329.7 L639.7 329.3 L643.2 329.1 L646.3 329.2 L649.0 329.5 L651.3 330.0 L653.0 330.8 L654.3 331.8 L655.1 333.0Z" fill="url(#g3)" />
<path d="M725.6 513.0 L725.7 514.1 L725.4 515.4 L724.5 516.9 L723.1 518.5 L721.2 520.3 L718.8 522.2 L716.0 524.2 L712.8 526.2 L709.2 528.4 L705.3 530.5 L701.1 532.7 L696.6 534.8 L692.0 536.9 L687.2 539.0 L682.3 540.9 L677.3 542.8 L672.4 544.5 L667.6 546.1 L662.8 547.6 L658.3 548.8 L653.9 549.9 L649.8 550.7 L646.1 551.4 L642.7 551.8 L639.7 552.0 L637.1 552.0 L634.9 551.7 L633.3 551.3 L632.1 550.6 L631.5 549.7 L560.9 369.6 L560.7 368.2 L560.9 366.6 L561.7 364.8 L563.0 362.9 L564.8 360.9 L567.0 358.7 L569.7 356.5 L572.9 354.2 L576.4 351.9 L580.2 349.6 L584.4 347.3 L588.8 345.0 L593.4 342.8 L598.2 340.7 L603.1 338.7 L608.1 336.9 L613.0 335.2 L617.9 333.7 L622.7 332.4 L627.3 331.3 L631.7 330.4 L635.9 329.7 L639.7 329.3 L643.2 329.1 L646.3 329.2 L649.0 329.5 L651.3 330.0 L653.0 330.8 L654.3 331.8 L655.1 333.0Z" fill="url(#hA)" opacity="0.78"/>
<path d="M654.6 333.2 L654.8 334.5 L654.5 336.0 L653.7 337.7 L652.4 339.5 L650.6 341.4 L648.4 343.5 L645.7 345.6 L642.5 347.8 L639.1 350.1 L635.2 352.3 L631.1 354.6 L626.7 356.8 L622.1 358.9 L617.4 361.0 L612.5 362.9 L607.6 364.8 L602.7 366.5 L597.9 368.0 L593.2 369.3 L588.6 370.5 L584.3 371.4 L580.2 372.1 L576.4 372.6 L573.0 372.8 L569.9 372.8 L567.3 372.6 L565.1 372.1 L563.4 371.5 L562.1 370.5 L561.4 369.4 L561.2 368.1 L561.5 366.6 L562.3 364.9 L563.6 363.1 L565.4 361.2 L567.6 359.1 L570.3 357.0 L573.5 354.8 L576.9 352.5 L580.8 350.3 L584.9 348.0 L589.3 345.8 L593.9 343.7 L598.6 341.6 L603.5 339.7 L608.4 337.8 L613.3 336.1 L618.1 334.6 L622.8 333.3 L627.4 332.1 L631.7 331.2 L635.8 330.5 L639.6 330.0 L643.0 329.8 L646.1 329.8 L648.7 330.0 L650.9 330.5 L652.6 331.1 L653.9 332.1 L654.6 333.2Z" fill="#6f93c8" opacity="0.13"/>
<path d="M608.3 364.0 L605.0 365.2 L601.6 366.3 L598.3 367.4 L595.1 368.3 L591.9 369.2 L588.8 369.9 L585.8 370.6 L582.9 371.2 L580.1 371.7 L577.5 372.0 L575.1 372.3 L572.8 372.4 L570.7 372.4 L568.8 372.4 L567.1 372.2 L565.7 371.9 L564.4 371.5 L563.4 371.0 L562.6 370.3 L562.0 369.6" stroke="#b9d9ff" stroke-width="1" fill="none" opacity="0.9"/>
<path d="M654.3 334.4 L654.2 335.4 L653.8 336.6 L653.1 337.8 L652.2 339.2 L650.9 340.5 L649.4 342.0 L647.7 343.5 L645.7 345.1 L643.4 346.7 L641.0 348.3 L638.3 350.0 L635.5 351.6 L632.5 353.3 L629.3 354.9 L626.0 356.6 L622.6 358.2 L619.1 359.7 L615.6 361.2 L611.9 362.6 L608.3 364.0" stroke="#7d9fd2" stroke-width="0.8" fill="none" stroke-dasharray="3 2" opacity="0.8"/>
<path d="M668.8 666.0 L693.0 684.7 L668.8 714.5Z" fill="#2a3f7a" stroke="#2a3f7a" stroke-width="0.7" stroke-linejoin="round" />
<path d="M753.0 634.5 L760.0 600.0 L791.0 640.0 L791.0 694.5 L786.0 695.6 L731.0 663.5Z" fill="#283c75" stroke="#283c75" stroke-width="0.7" stroke-linejoin="round" />
<path d="M791.300 646 V694" stroke="#2f4a8d" stroke-width="1.200" fill="none"/>
<path d="M742.0 625.0 L753.0 634.5 L730.6 663.8 L697.0 682.5 L722.0 645.0Z" fill="#1c2a55" stroke="#1c2a55" stroke-width="0.7" stroke-linejoin="round" />
<path d="M753.0 634.5 L731.0 663.5" stroke="#f7cf00" stroke-width="2.6" stroke-linecap="butt" fill="none"/>
<path d="M731.0 663.5 L786.0 695.6" stroke="#f7cf00" stroke-width="2.6" stroke-linecap="butt" fill="none"/>
<path d="M693.0 684.7 L701.0 700.0 L742.5 810.0 L745.0 810.6 L778.8 789.4 L748.8 713.0 L737.5 705.0Z" fill="#2f4a8d" stroke="#2f4a8d" stroke-width="0.7" stroke-linejoin="round" />
<path d="M737.5 705.0 L748.8 713.0 L779.4 788.8 L789.4 789.4 L789.4 733.8 L807.0 739.4Z" fill="#283c75" stroke="#283c75" stroke-width="0.7" stroke-linejoin="round" />
<path d="M789.4 730.8 L789.4 789.0 L817.5 767.5 L808.0 743.8 L807.0 739.4Z" fill="#2f4a8d" stroke="#2f4a8d" stroke-width="0.7" stroke-linejoin="round" />
<path d="M789.400 734 V789" stroke="#3a5598" stroke-width="1" fill="none"/>
<path d="M748.8 713.0 L779.4 788.8" stroke="#f7cf00" stroke-width="2.6" stroke-linecap="butt" fill="none"/>
<path d="M745.0 810.6 L778.8 789.4" stroke="#f7cf00" stroke-width="3" stroke-linecap="butt" fill="none"/>
<path d="M778.8 789.4 L789.5 789.4" stroke="#f7cf00" stroke-width="3" stroke-linecap="butt" fill="none"/>
<path d="M792.0 783.0 L817.5 767.5" stroke="#f7cf00" stroke-width="3" stroke-linecap="butt" fill="none"/>
<path d="M700.6 703.8 L680.0 730.0 L702.0 758.8 L725.0 766.0 L701.0 700.0Z" fill="#283c75" stroke="#283c75" stroke-width="0.7" stroke-linejoin="round" />
<path d="M693.0 684.7 L701.0 703.8 L680.0 730.0 L646.0 751.0 L643.8 746.0 L687.5 690.0Z" fill="#1c2a55" stroke="#1c2a55" stroke-width="0.7" stroke-linejoin="round" />
<path d="M700.6 703.8 L680.0 730.0" stroke="#f7cf00" stroke-width="2.6" stroke-linecap="butt" fill="none"/>
<path d="M680.0 730.0 L646.0 752.0" stroke="#f7cf00" stroke-width="2.6" stroke-linecap="butt" fill="none"/>
<path d="M680.0 730.0 L702.0 758.8" stroke="#f7cf00" stroke-width="2.6" stroke-linecap="butt" fill="none"/>
<path d="M824.9 630.6 L821.8 634.3 L818.3 637.5 L814.3 640.4 L809.9 642.7 L805.3 644.6 L800.3 646.0 L795.1 646.8 L789.7 647.1 L784.3 646.8 L778.8 646.0 L773.3 644.6 L767.8 642.8 L762.6 640.4 L757.5 637.6 L752.6 634.3 L748.0 630.6 L743.8 626.6 L740.0 622.2 L736.6 617.6 L733.7 612.7 L731.4 607.7 L729.5 602.5 L728.2 597.3 L727.4 592.1 L727.3 587.0 L727.7 582.0 L728.7 577.1 L730.2 572.5 L732.3 568.1 L734.9 564.0 L738.0 560.4 L741.6 557.1 L745.5 554.2 L749.9 551.9 L754.6 550.0 L759.6 548.7 L764.7 547.8 L770.1 547.6 L775.6 547.8 L781.1 548.7 L786.6 550.0 L792.0 551.9 L797.3 554.2 L802.4 557.1 L807.2 560.3 L811.8 564.0 L816.0 568.1 L819.8 572.4 L823.2 577.1 L826.1 581.9 L828.5 586.9 L830.4 592.1 L831.7 597.3 L832.4 602.5 L832.6 607.6 L832.2 612.7 L831.2 617.5 L829.6 622.2 L827.6 626.5 L824.9 630.6Z" fill="#2d4a8c" stroke="#2d4a8c" stroke-width="0.7" stroke-linejoin="round" />
<path d="M825.4 626.6 L822.4 630.1 L819.0 633.2 L815.2 635.9 L811.0 638.2 L806.5 640.0 L801.8 641.2 L796.8 642.0 L791.6 642.3 L786.4 642.0 L781.1 641.2 L775.8 639.9 L770.6 638.1 L765.5 635.8 L760.5 633.0 L755.9 629.9 L751.5 626.3 L747.4 622.4 L743.7 618.2 L740.5 613.8 L737.7 609.1 L735.3 604.3 L733.5 599.3 L732.2 594.3 L731.5 589.3 L731.3 584.4 L731.7 579.6 L732.6 574.9 L734.1 570.5 L736.1 566.3 L738.6 562.4 L741.6 558.9 L745.0 555.8 L748.8 553.1 L753.0 550.8 L757.5 549.0 L762.2 547.8 L767.2 547.0 L772.4 546.7 L777.6 547.0 L782.9 547.8 L788.2 549.1 L793.4 550.9 L798.5 553.2 L803.5 556.0 L808.1 559.1 L812.5 562.7 L816.6 566.6 L820.3 570.8 L823.5 575.2 L826.3 579.9 L828.7 584.7 L830.5 589.7 L831.8 594.7 L832.5 599.7 L832.7 604.6 L832.3 609.4 L831.4 614.1 L829.9 618.5 L827.9 622.7 L825.4 626.6Z" fill="#f5c800" stroke="#f5c800" stroke-width="0.7" stroke-linejoin="round" />
<path d="M893.2 530.7 L895.5 527.1 L897.4 523.2 L898.8 519.1 L899.6 514.7 L900.0 510.2 L899.8 505.7 L899.2 501.0 L898.0 496.4 L896.3 491.8 L894.2 487.3 L891.6 483.0 L888.6 478.8 L885.2 474.9 L881.4 471.3 L877.4 468.0 L873.0 465.1 L868.5 462.6 L863.7 460.5 L858.9 458.8 L854.0 457.6 L849.1 456.9 L844.2 456.6 L839.4 456.9 L834.8 457.6 L830.4 458.8 L826.2 460.5 L822.3 462.6 L818.7 465.1 L815.6 468.0 L812.8 471.3 L741.8 564.8 L739.5 568.4 L737.6 572.3 L736.2 576.4 L735.4 580.8 L735.0 585.3 L735.2 589.8 L735.8 594.5 L737.0 599.1 L738.7 603.7 L740.8 608.2 L743.4 612.5 L746.4 616.7 L749.8 620.6 L753.6 624.2 L757.6 627.5 L762.0 630.4 L766.5 632.9 L771.3 635.0 L776.1 636.7 L781.0 637.9 L785.9 638.6 L790.8 638.9 L795.6 638.6 L800.2 637.9 L804.6 636.7 L808.8 635.0 L812.7 632.9 L816.3 630.4 L819.4 627.5 L822.2 624.2Z" fill="url(#g4)" />
<path d="M893.2 530.7 L895.5 527.1 L897.4 523.2 L898.8 519.1 L899.6 514.7 L900.0 510.2 L899.8 505.7 L899.2 501.0 L898.0 496.4 L896.3 491.8 L894.2 487.3 L891.6 483.0 L888.6 478.8 L885.2 474.9 L881.4 471.3 L877.4 468.0 L873.0 465.1 L868.5 462.6 L863.7 460.5 L858.9 458.8 L854.0 457.6 L849.1 456.9 L844.2 456.6 L839.4 456.9 L834.8 457.6 L830.4 458.8 L826.2 460.5 L822.3 462.6 L818.7 465.1 L815.6 468.0 L812.8 471.3 L741.8 564.8 L739.5 568.4 L737.6 572.3 L736.2 576.4 L735.4 580.8 L735.0 585.3 L735.2 589.8 L735.8 594.5 L737.0 599.1 L738.7 603.7 L740.8 608.2 L743.4 612.5 L746.4 616.7 L749.8 620.6 L753.6 624.2 L757.6 627.5 L762.0 630.4 L766.5 632.9 L771.3 635.0 L776.1 636.7 L781.0 637.9 L785.9 638.6 L790.8 638.9 L795.6 638.6 L800.2 637.9 L804.6 636.7 L808.8 635.0 L812.7 632.9 L816.3 630.4 L819.4 627.5 L822.2 624.2Z" fill="url(#hB)" opacity="0.85"/>
<path d="M893.2 530.7 L890.4 534.0 L887.3 536.9 L883.7 539.4 L879.8 541.5 L875.6 543.2 L871.2 544.4 L866.6 545.1 L861.8 545.4 L856.9 545.1 L852.0 544.4 L847.1 543.2 L842.3 541.5 L837.5 539.4 L833.0 536.9 L828.6 534.0 L824.6 530.7 L820.8 527.1 L817.4 523.2 L814.4 519.0 L811.8 514.7 L809.7 510.2 L808.0 505.6 L806.8 501.0 L806.2 496.3 L806.0 491.8 L806.4 487.3 L807.2 482.9 L808.6 478.8 L810.5 474.9 L812.8 471.3 L815.6 468.0 L818.7 465.1 L822.3 462.6 L826.2 460.5 L830.4 458.8 L834.8 457.6 L839.4 456.9 L844.2 456.6 L849.1 456.9 L854.0 457.6 L858.9 458.8 L863.7 460.5 L868.5 462.6 L873.0 465.1 L877.4 468.0 L881.4 471.3 L885.2 474.9 L888.6 478.8 L891.6 483.0 L894.2 487.3 L896.3 491.8 L898.0 496.4 L899.2 501.0 L899.8 505.7 L900.0 510.2 L899.6 514.7 L898.8 519.1 L897.4 523.2 L895.5 527.1 L893.2 530.7Z" fill="#8fbaf0" stroke="#8fbaf0" stroke-width="0.7" stroke-linejoin="round" />
<path d="M891.8 529.7 L889.2 532.8 L886.1 535.6 L882.7 538.1 L879.0 540.1 L875.0 541.6 L870.7 542.8 L866.2 543.5 L861.6 543.7 L856.9 543.4 L852.2 542.7 L847.5 541.5 L842.8 539.9 L838.2 537.9 L833.8 535.4 L829.7 532.6 L825.7 529.4 L822.1 525.9 L818.8 522.2 L815.9 518.2 L813.4 514.0 L811.3 509.7 L809.7 505.3 L808.5 500.8 L807.9 496.4 L807.7 492.0 L808.0 487.6 L808.9 483.5 L810.2 479.5 L811.9 475.8 L814.2 472.3 L816.8 469.2 L819.9 466.4 L823.3 463.9 L827.0 461.9 L831.0 460.4 L835.3 459.2 L839.8 458.5 L844.4 458.3 L849.1 458.6 L853.8 459.3 L858.5 460.5 L863.2 462.1 L867.8 464.1 L872.2 466.6 L876.3 469.4 L880.3 472.6 L883.9 476.1 L887.2 479.8 L890.1 483.8 L892.6 488.0 L894.7 492.3 L896.3 496.7 L897.5 501.2 L898.1 505.6 L898.3 510.0 L898.0 514.4 L897.1 518.5 L895.8 522.5 L894.1 526.2 L891.8 529.7Z" fill="#7b9fcb" stroke="#7b9fcb" stroke-width="0.7" stroke-linejoin="round" />
<path d="M891.8 529.7 L889.2 532.8 L886.1 535.6 L882.7 538.1 L879.0 540.1 L875.0 541.6 L870.7 542.8 L866.2 543.5 L861.6 543.7 L856.9 543.4 L852.2 542.7 L847.5 541.5 L842.8 539.9 L838.2 537.9 L833.8 535.4 L829.7 532.6 L825.7 529.4 L822.1 525.9 L818.8 522.2 L815.9 518.2 L813.4 514.0 L811.3 509.7 L809.7 505.3 L808.5 500.8 L807.9 496.4 L807.7 492.0 L808.0 487.6 L808.9 483.5 L810.2 479.5 L811.9 475.8 L814.2 472.3 L816.8 469.2 L819.9 466.4 L823.3 463.9 L827.0 461.9 L831.0 460.4 L835.3 459.2 L839.8 458.5 L844.4 458.3 L849.1 458.6 L853.8 459.3 L858.5 460.5 L863.2 462.1 L867.8 464.1 L872.2 466.6 L876.3 469.4 L880.3 472.6 L883.9 476.1 L887.2 479.8 L890.1 483.8 L892.6 488.0 L894.7 492.3 L896.3 496.7 L897.5 501.2 L898.1 505.6 L898.3 510.0 L898.0 514.4 L897.1 518.5 L895.8 522.5 L894.1 526.2 L891.8 529.7Z" fill="url(#hB)" opacity="0.8"/>
<g id="lbl" font-family="Liberation Sans, sans-serif" font-size="15.5" fill="#000"><rect x="519" y="535" width="28" height="16.5" fill="#fff"/><text x="533.0" y="548.5" text-anchor="middle">B2</text><rect x="610" y="533" width="26" height="17" fill="#fff"/><text x="623.0" y="547" text-anchor="middle">D3</text><rect x="722" y="603" width="27" height="17" fill="#fff"/><text x="735.5" y="617" text-anchor="middle">D1</text><rect x="607" y="753.75" width="29" height="16.5" fill="#fff"/><text x="621.5" y="767.25" text-anchor="middle">D4</text><rect x="725" y="823.75" width="25" height="16.5" fill="#fff"/><text x="737.5" y="837.25" text-anchor="middle">D2</text><text x="915" y="742">B1</text></g>
</svg>
<!--MODEL-END-->

<!-- ===== tree ===== -->
<div class="abs" id="sbtrack"></div>
<div class="abs" id="sbthumb"></div>
<div class="abs" id="selrow"></div>
<!--TREE-START-->
<div class="t treeh" id="tr1" style="left:1297.2px;top:337.7px;transform:scaleX(1.062);transform-origin:0 50%">Member</div>
<div class="t tree" id="tr2" style="left:1298.0px;top:369.7px;transform:scaleX(0.878);transform-origin:0 50%">B1</div>
<div class="t tree" id="tr3" style="left:1298.0px;top:403.7px;transform:scaleX(0.908);transform-origin:0 50%">B2</div>
<div class="t tree" id="tr4" style="left:1298.0px;top:437.7px;transform:scaleX(0.898);transform-origin:0 50%">D1</div>
<div class="t tree" id="tr5" style="left:1298.0px;top:471.7px;transform:scaleX(0.898);transform-origin:0 50%">D2</div>
<div class="t tree" id="tr6" style="left:1298.0px;top:505.7px;transform:scaleX(0.898);transform-origin:0 50%">D3</div>
<div class="t tree" id="tr7" style="left:1298.0px;top:539.7px;transform:scaleX(0.927);transform-origin:0 50%">D4</div>
<div class="t treeh" id="tr8" style="left:1297.0px;top:573.7px;transform:scaleX(0.975);transform-origin:0 50%">Load Effects</div>
<div class="t tree" id="tr9" style="left:1298.0px;top:605.7px;transform:scaleX(0.915);transform-origin:0 50%">LE1</div>
<div class="t treeh" id="tr10" style="left:1297.0px;top:639.7px;transform:scaleX(0.976);transform-origin:0 50%">Plate</div>
<div class="t tree w" id="tr11" style="-webkit-text-stroke:0.3px #fff;left:1298.0px;top:671.7px;transform:scaleX(0.877);transform-origin:0 50%">SP1</div>
<div class="t tree" id="tr12" style="left:1298.0px;top:705.7px;transform:scaleX(0.877);transform-origin:0 50%">SP2</div>
<div class="t tree" id="tr13" style="left:1298.0px;top:739.7px;transform:scaleX(0.877);transform-origin:0 50%">SP3</div>
<div class="t tree" id="tr14" style="left:1298.0px;top:773.7px;transform:scaleX(0.877);transform-origin:0 50%">SP4</div>
<div class="t tree" id="tr15" style="left:1298.0px;top:807.7px;transform:scaleX(0.877);transform-origin:0 50%">SP5</div>
<div class="t tree" id="tr16" style="left:1298.0px;top:841.7px;transform:scaleX(0.877);transform-origin:0 50%">SP6</div>
<div class="t tree" id="tr17" style="left:1298.0px;top:875.7px;transform:scaleX(0.896);transform-origin:0 50%">CPL1a</div>
<div class="t tree" id="tr18" style="left:1298.0px;top:909.7px;transform:scaleX(0.930);transform-origin:0 50%">CPL1b</div>
<div class="t tree" id="tr19" style="left:1298.0px;top:943.7px;transform:scaleX(0.877);transform-origin:0 50%">SP7</div>
<div class="t tree" id="tr20" style="left:1298.0px;top:977.7px;transform:scaleX(0.896);transform-origin:0 50%">CPL2a</div>
<div class="t tree" id="tr21" style="left:1298.0px;top:1011.7px;transform:scaleX(0.930);transform-origin:0 50%">CPL2b</div>
<svg id="treeicons" style="left:0;top:0" width="1919" height="1154" viewBox="0 0 1919 1154" fill="none" stroke="#f26c22" stroke-width="1.200"><path d="M1281 341.5 L1286 346.5 L1291 341.5 M1281 577.5 L1286 582.5 L1291 577.5 M1281 643.5 L1286 648.5 L1291 643.5"/><path d="M1440 340 L1443.500 335.500 L1447 340Z M1440 1026 L1443.500 1030.500 L1447 1026Z" fill="#555" stroke="none"/></svg>
<!--TREE-END-->

<!-- ===== right panel ===== -->
<div class="abs" id="rpanel"></div>
<div class="abs" id="rhead"></div>
<div class="abs" id="rsep"></div>
<div class="t w" id="rtitle" style="left:1471.2px;top:217.7px;font-size:13.5px;transform:scaleX(0.992);transform-origin:0 50%"><b>SP1</b> [Plate]</div>
<div class="t" id="props" style="left:1473.0px;top:256.7px;font-size:14px;font-weight:bold;color:#f26c22;transform:scaleX(0.939);transform-origin:0 50%">Properties</div>
<div class="t" id="mat" style="-webkit-text-stroke:0.3px #222;left:1473.0px;top:290.7px;font-size:13.5px;color:#222;transform:scaleX(1.083);transform-origin:0 50%">Material</div>
<div class="t" id="matv" style="left:1605.0px;top:290.7px;font-size:13.5px;color:#333;transform:scaleX(0.947);transform-origin:0 50%">S 235</div>
<div class="t" id="thk" style="-webkit-text-stroke:0.3px #222;left:1473.0px;top:322.7px;font-size:13.5px;color:#222;transform:scaleX(0.999);transform-origin:0 50%">Thickness</div>
<div class="t" id="thkv" style="left:1605.0px;top:322.7px;font-size:13.5px;color:#333;transform:scaleX(1.027);transform-origin:0 50%">12 mm</div>
<!--DRAWING-START-->
<svg id="drawing" style="left:1461px;top:357px" width="458" height="760" viewBox="1461 357 458 760" fill="none" stroke="#2a2a2a" stroke-width="0.8">
<path d="M1578.5 560.2 L1698.8 545.8 L1819.2 560.2 V618.0 L1698.8 632.4 L1578.5 618.0Z"/>
<circle cx="1592.9" cy="574.7" r="3.1"/><circle cx="1592.9" cy="589.1" r="3.1"/><circle cx="1592.9" cy="603.6" r="3.1"/><circle cx="1612.2" cy="574.7" r="3.1"/><circle cx="1612.2" cy="589.1" r="3.1"/><circle cx="1612.2" cy="603.6" r="3.1"/><circle cx="1785.5" cy="574.7" r="3.1"/><circle cx="1785.5" cy="589.1" r="3.1"/><circle cx="1785.5" cy="603.6" r="3.1"/><circle cx="1804.8" cy="574.7" r="3.1"/><circle cx="1804.8" cy="589.1" r="3.1"/><circle cx="1804.8" cy="603.6" r="3.1"/>
<path d="M1588.6 574.7 L1597.2 574.7 M1592.9 570.4 L1592.9 579.0 M1588.6 589.1 L1597.2 589.1 M1592.9 584.8 L1592.9 593.4 M1588.6 603.6 L1597.2 603.6 M1592.9 599.3 L1592.9 607.9 M1607.9 574.7 L1616.5 574.7 M1612.2 570.4 L1612.2 579.0 M1607.9 589.1 L1616.5 589.1 M1612.2 584.8 L1612.2 593.4 M1607.9 603.6 L1616.5 603.6 M1612.2 599.3 L1612.2 607.9 M1781.2 574.7 L1789.8 574.7 M1785.5 570.4 L1785.5 579.0 M1781.2 589.1 L1789.8 589.1 M1785.5 584.8 L1785.5 593.4 M1781.2 603.6 L1789.8 603.6 M1785.5 599.3 L1785.5 607.9 M1800.5 574.7 L1809.1 574.7 M1804.8 570.4 L1804.8 579.0 M1800.5 589.1 L1809.1 589.1 M1804.8 584.8 L1804.8 593.4 M1800.5 603.6 L1809.1 603.6 M1804.8 599.3 L1804.8 607.9 M1497.5 545.8 L1562.0 545.8 M1497.5 632.4 L1562.0 632.4 M1514.5 560.2 L1524.0 560.2 M1514.5 618.0 L1524.0 618.0 M1533.0 574.7 L1562.0 574.7 M1533.0 589.1 L1562.0 589.1 M1533.0 603.6 L1562.0 603.6 M1501.4 545.8 L1501.4 632.4 M1518.5 545.8 L1518.5 632.4 M1536.0 545.8 L1536.0 632.4 M1835.7 545.8 L1882.7 545.8 M1835.7 632.4 L1882.7 632.4 M1835.7 560.2 L1865.6 560.2 M1835.7 618.0 L1865.6 618.0 M1862.0 545.8 L1862.0 632.4 M1879.4 545.8 L1879.4 632.4 M1578.5 637.9 L1578.5 685.4 M1819.2 637.9 L1819.2 685.4 M1592.9 637.9 L1592.9 668.3 M1612.2 637.9 L1612.2 668.3 M1785.5 637.9 L1785.5 668.3 M1804.8 637.9 L1804.8 668.3 M1578.5 664.6 L1819.2 664.6 M1578.5 681.5 L1819.2 681.5 M1767.2 614.3 L1834.1 575.3" stroke-width="0.7"/>
<path d="M1501.4 545.8 L1502.7 552.3 L1500.1 552.3Z M1501.4 632.4 L1500.1 625.9 L1502.7 625.9Z M1518.5 545.8 L1519.8 552.3 L1517.2 552.3Z M1518.5 560.2 L1517.2 553.7 L1519.8 553.7Z M1518.5 560.2 L1519.8 566.7 L1517.2 566.7Z M1518.5 618.0 L1517.2 611.5 L1519.8 611.5Z M1518.5 618.0 L1519.8 624.5 L1517.2 624.5Z M1518.5 632.4 L1517.2 625.9 L1519.8 625.9Z M1536.0 545.8 L1537.3 552.3 L1534.7 552.3Z M1536.0 574.7 L1534.7 568.2 L1537.3 568.2Z M1536.0 574.7 L1537.3 581.2 L1534.7 581.2Z M1536.0 589.1 L1534.7 582.6 L1537.3 582.6Z M1536.0 589.1 L1537.3 595.6 L1534.7 595.6Z M1536.0 603.6 L1534.7 597.1 L1537.3 597.1Z M1536.0 603.6 L1537.3 610.1 L1534.7 610.1Z M1536.0 632.4 L1534.7 625.9 L1537.3 625.9Z M1862.0 545.8 L1863.3 552.3 L1860.7 552.3Z M1862.0 560.2 L1860.7 553.7 L1863.3 553.7Z M1862.0 560.2 L1863.3 566.7 L1860.7 566.7Z M1862.0 618.0 L1860.7 611.5 L1863.3 611.5Z M1862.0 618.0 L1863.3 624.5 L1860.7 624.5Z M1862.0 632.4 L1860.7 625.9 L1863.3 625.9Z M1879.4 545.8 L1880.7 552.3 L1878.1 552.3Z M1879.4 632.4 L1878.1 625.9 L1880.7 625.9Z M1578.5 664.6 L1585.0 663.3 L1585.0 665.9Z M1592.9 664.6 L1586.4 665.9 L1586.4 663.3Z M1592.9 664.6 L1599.4 663.3 L1599.4 665.9Z M1612.2 664.6 L1605.7 665.9 L1605.7 663.3Z M1612.2 664.6 L1618.7 663.3 L1618.7 665.9Z M1785.5 664.6 L1779.0 665.9 L1779.0 663.3Z M1785.5 664.6 L1792.0 663.3 L1792.0 665.9Z M1804.8 664.6 L1798.3 665.9 L1798.3 663.3Z M1804.8 664.6 L1811.3 663.3 L1811.3 665.9Z M1819.2 664.6 L1812.7 665.9 L1812.7 663.3Z M1578.5 681.5 L1585.0 680.2 L1585.0 682.8Z M1819.2 681.5 L1812.7 682.8 L1812.7 680.2Z M1782.8 605.1 L1778.2 609.2 L1777.0 607.1Z M1788.2 602.0 L1792.8 597.9 L1794.0 600.0Z" fill="#111" stroke="none"/>
<g font-family="Liberation Sans, sans-serif" font-size="11.5" fill="#2a2a2a" stroke="none">
<text transform="translate(1500.6,589) rotate(-90)" text-anchor="middle">360</text>
<text transform="translate(1517.8,589) rotate(-90)" text-anchor="middle">240</text>
<text transform="translate(1517.8,552.5) rotate(-90)" text-anchor="middle">60</text>
<text transform="translate(1517.8,625.5) rotate(-90)" text-anchor="middle">60</text>
<text transform="translate(1535.2,559) rotate(-90)" text-anchor="middle">120</text>
<text transform="translate(1535.2,619) rotate(-90)" text-anchor="middle">120</text>
<text transform="translate(1535.2,582) rotate(-90)" text-anchor="middle">60</text>
<text transform="translate(1535.2,596.5) rotate(-90)" text-anchor="middle">60</text>
<text transform="translate(1861.2,552.5) rotate(-90)" text-anchor="middle">60</text>
<text transform="translate(1861.2,625.5) rotate(-90)" text-anchor="middle">60</text>
<text transform="translate(1861.2,589) rotate(-90)" text-anchor="middle">240</text>
<text transform="translate(1878.6,589) rotate(-90)" text-anchor="middle">360</text>
<text x="1585.5" y="663.8" text-anchor="middle">60</text>
<text x="1602.5" y="663.8" text-anchor="middle">80</text>
<text x="1699" y="663.8" text-anchor="middle">720</text>
<text x="1795" y="663.8" text-anchor="middle">80</text>
<text x="1812" y="663.8" text-anchor="middle">60</text>
<text x="1699" y="680.8" text-anchor="middle">1000</text>
<text transform="translate(1804.5,590.5) rotate(-30.2)">ϕ26.0</text>
</g>
<g stroke="#222" stroke-width="1.1"><circle cx="1890.3" cy="384.8" r="5.1"/><path d="M1887.7 384.800 H1892.900 M1890.300 382.200 V387.400 M1894 388.600 L1898.200 392.800"/></g>
</svg>
<!--DRAWING-END-->

<!-- ===== footer ===== -->
<div class="abs" id="footer"></div>
<div class="abs" id="footer2"></div>
<div class="t" id="dcode" style="left:12.0px;top:1128px;font-size:13.5px;color:#c8c8c8;transform:scaleX(0.997);transform-origin:0 50%">Design code: <span class="w">EN</span></div>
<div class="t w" id="copy" style="left:1480.6px;top:1128px;font-size:13.5px;transform:scaleX(1.003);transform-origin:0 50%">©&nbsp; IDEA StatiCa 2009-2024</div>
<div class="t w" id="tos" style="left:1663.7px;top:1128px;font-size:13.5px;text-decoration:underline;transform:scaleX(0.999);transform-origin:0 50%">Terms of service</div>
<div class="t w" id="www" style="left:1779.8px;top:1128px;font-size:13.5px;transform:scaleX(1.014);transform-origin:0 50%"><span style="color:#f15a22">www.</span>ideastatica<span style="color:#f15a22">.com</span></div>
</body>
</html>
